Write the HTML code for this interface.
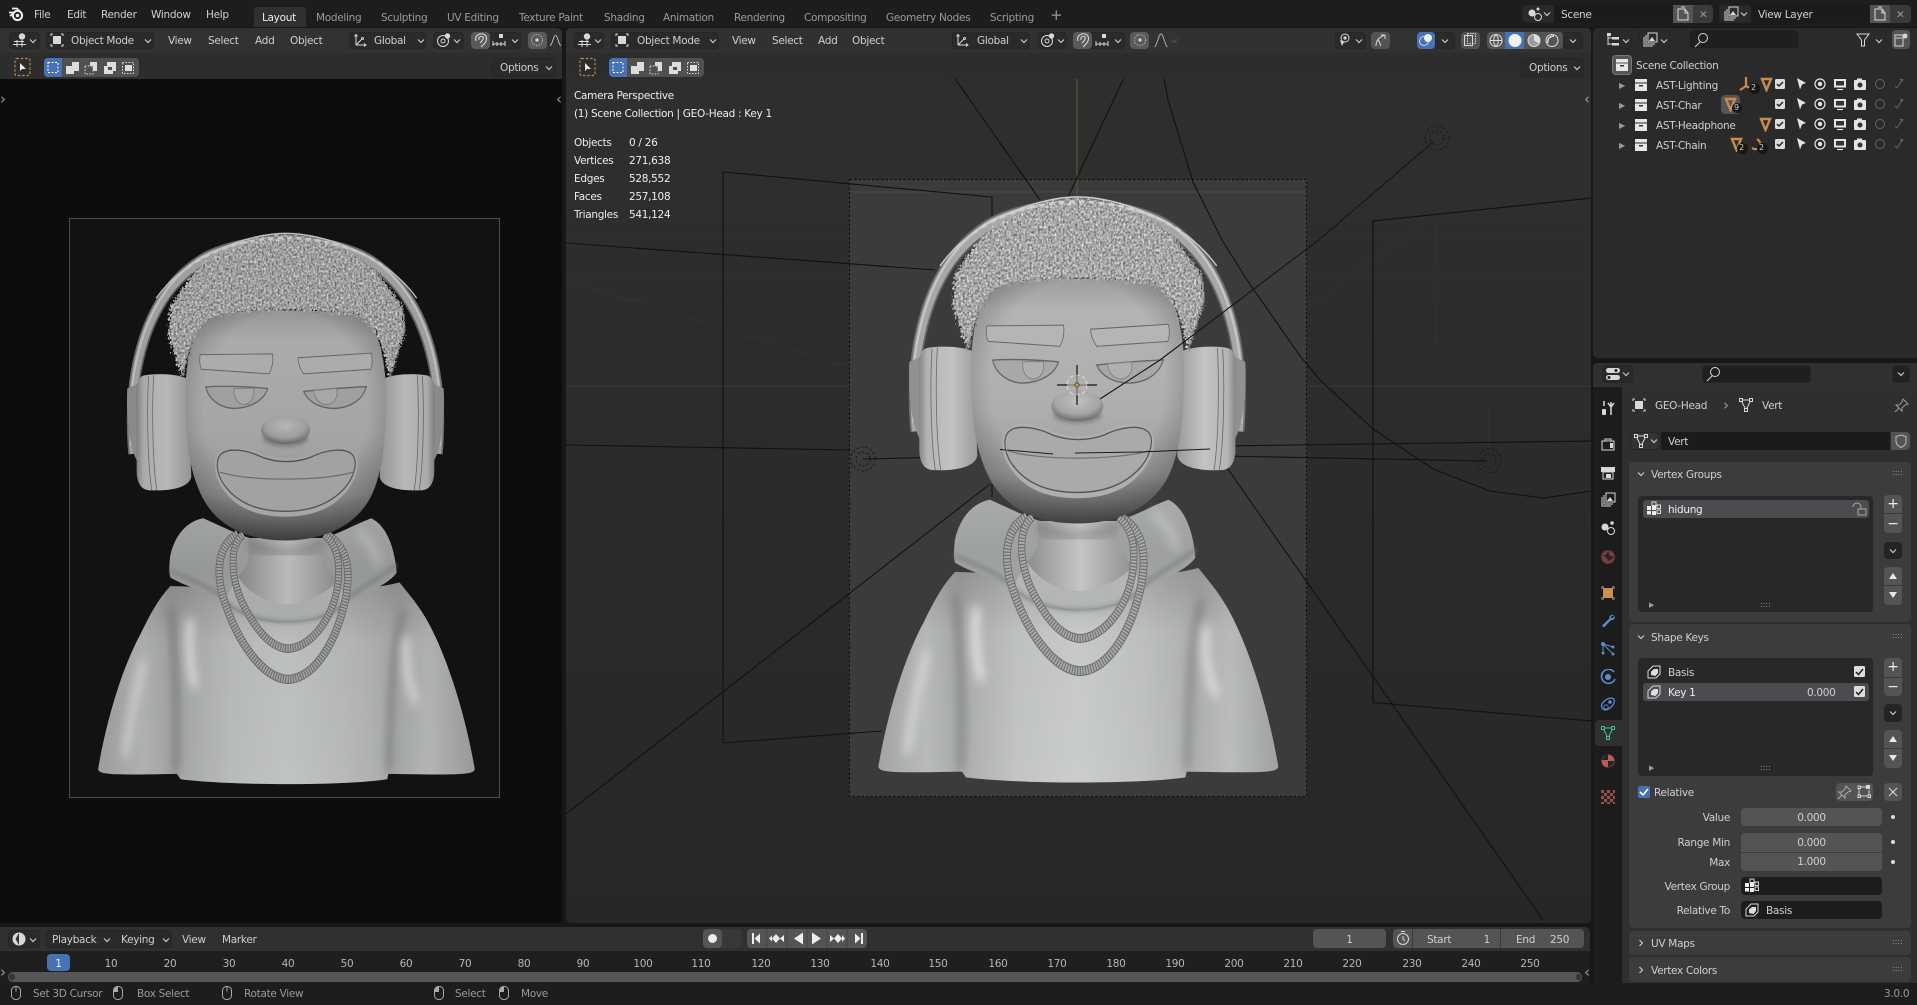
<!DOCTYPE html>
<html><head><meta charset="utf-8"><title>Blender</title>
<style>
html,body{margin:0;padding:0;width:1917px;height:1005px;overflow:hidden;background:#171717}
*{box-sizing:border-box}
body{font-family:"DejaVu Sans","Liberation Sans",sans-serif;font-size:10.5px;letter-spacing:-.3px;color:#cfcfcf;position:relative}
.a{position:absolute}
.t{position:absolute;white-space:nowrap;line-height:14px;color:#cfcfcf;margin-top:1px}
.d{color:#9a9a9a}.w{color:#eee}
.r{text-align:right}.m{text-align:center}
.i{position:absolute;width:16px;height:16px;fill:none;stroke:currentColor;color:#d8d8d8;stroke-width:1}
.c{width:10px;height:10px;color:#c8c8c8;stroke-width:1.2}
.b{position:absolute;background:#2a2a2a;border:1px solid #262626;border-radius:4px}
.g{position:absolute;background:#545454;border-radius:4px}
.h{position:absolute;left:0;right:0;background:rgba(50,50,50,.93)}
.s{position:absolute;left:0;right:0;background:rgba(45,45,45,.88)}
.p{position:absolute;background:#3c3c3c;border-radius:4px;left:36px;width:282px}
.l{position:absolute;background:#282828;border-radius:4px;left:45px;width:235px}
.n{position:absolute;text-align:center;width:40px;line-height:14px;color:#b5b5b5;top:957px}
</style></head><body>
<svg width="0" height="0" style="position:absolute">
<defs>
<symbol id="chev" viewBox="0 0 10 10"><path d="M2 3.5L5 6.5L8 3.5"/></symbol>
<symbol id="logo" viewBox="0 0 16 16"><circle cx="9.5" cy="9.5" r="4.6" fill="none" stroke="#eee" stroke-width="2"/><circle cx="9.5" cy="9.5" r="1.8" fill="#eee" stroke="none"/><path d="M1 6.5h6M4 2.5h5l4 4M2 10l5-4" stroke="#eee" stroke-width="1.8" fill="none"/></symbol>
<symbol id="ed3d" viewBox="0 0 16 16"><path d="M1 12.5h13M2 9.5h10M5 8v7M10 8v7"/><circle cx="10" cy="4.5" r="3.2" fill="currentColor" stroke="none"/></symbol>
<symbol id="obj" viewBox="0 0 16 16"><path d="M4 2H2v2M12 2h2v2M4 14H2v-2M12 14h2v-2"/><rect x="4" y="4" width="8" height="8" fill="currentColor" stroke="none"/></symbol>
<symbol id="glob" viewBox="0 0 16 16"><path d="M4 13V2.5M4 13h10M4 13l6-6M2.5 4.5L4 2.5l1.5 2M12 11.5l2 1.5-2 1.5"/><circle cx="10.5" cy="6.5" r="1"/></symbol>
<symbol id="pivot" viewBox="0 0 16 16"><circle cx="7" cy="9" r="5.5"/><circle cx="7" cy="9" r="2"/><circle cx="11.5" cy="4" r="2.7" fill="currentColor" stroke="none"/></symbol>
<symbol id="magnet" viewBox="0 0 16 16"><path d="M3 9C1 3 8 0 12 3c3 3 1 7-1 9l-3 3M6 8C5 4 9 4 10 5c1 2-1 4-3 6" stroke-width="1.1"/></symbol>
<symbol id="snap" viewBox="0 0 16 16"><path d="M2 9v5M14 9v5M2 12h12M6 10v4M10 10v4"/><rect x="8" y="2" width="4" height="4" fill="currentColor" stroke="none"/></symbol>
<symbol id="prop" viewBox="0 0 16 16"><circle cx="8" cy="8" r="5.5" stroke-dasharray="1.5 1.2" opacity=".7"/><circle cx="8" cy="8" r="1.6" fill="currentColor" stroke="none"/></symbol>
<symbol id="fall" viewBox="0 0 16 16"><path d="M1.5 15C4.5 13 5.5 2 8 2s3.500 11 6.500 13"/></symbol>
<symbol id="tool" viewBox="0 0 20 20"><rect x="2" y="1.500" width="15" height="17" rx="1.500" fill="none" stroke="#b08a50" stroke-dasharray="2.500 1.800" stroke-width="1.200"/><path d="M7 6v8l2-2h4z" fill="#eee" stroke="none"/></symbol>
<symbol id="sel" viewBox="0 0 95 19"><rect width="95" height="19" rx="4" fill="#505050" stroke="none"/><path d="M4 0h14v19H4a4 4 0 0 1-4-4V4a4 4 0 0 1 4-4z" fill="#4772b3" stroke="none"/><rect x="4" y="4.500" width="10" height="10" fill="none" stroke="#fff" stroke-dasharray="2 1.500"/><path fill="#ddd" stroke="none" d="M22 8h6V4h7v9h-5v3h-8z"/><rect x="41" y="8" width="8" height="8" fill="none" stroke="#ddd" stroke-dasharray="1.500 1.500"/><path fill="#ddd" stroke="none" d="M46 4h7v9h-4V8h-3z"/><path fill="#ddd" fill-rule="evenodd" stroke="none" d="M60 8h3V4h9v9h-3v3h-9zM64 9v3h4V9z"/><rect x="78.500" y="4.500" width="11" height="11" fill="none" stroke="#ddd" stroke-dasharray="1.500 1.500"/><rect x="81" y="7" width="7" height="6" fill="#ddd" stroke="none"/></symbol>
<symbol id="coll" viewBox="0 0 16 16"><rect x="2" y="2" width="12" height="3.500" fill="#e6e6e6" stroke="none"/><path d="M2 6.500h12V14H2z" fill="#e6e6e6" stroke="none"/><rect x="6" y="8" width="4" height="1.500" fill="#333" stroke="none"/></symbol>
<symbol id="tri" viewBox="0 0 16 16"><path d="M4 3h9L8.500 14z" fill="none" stroke="#c98c50" stroke-width="2.400"/></symbol>
<symbol id="rowic" viewBox="0 0 136 16">
<rect x="3" y="3" width="10" height="10" rx="1.500" fill="#ddd" stroke="none"/><path d="M5 8l2 2 4-4" stroke="#222" stroke-width="1.500" fill="none"/>
<path d="M25 2l9 5-4 1.500-2 5z" fill="#e4e4e4" stroke="none"/>
<circle cx="48" cy="8" r="5" fill="none" stroke="#e4e4e4" stroke-width="1.200"/><circle cx="48" cy="8" r="2.200" fill="#e4e4e4" stroke="none"/>
<rect x="62" y="3" width="12" height="8.500" fill="#e4e4e4" stroke="none"/><rect x="64" y="5" width="8" height="4.500" fill="#333" stroke="none"/><path d="M65 13.500h6" stroke="#e4e4e4" stroke-width="1.200"/>
<rect x="82" y="4" width="12" height="10" rx="1" fill="#e4e4e4" stroke="none"/><rect x="85" y="2.500" width="5" height="2" fill="#e4e4e4" stroke="none"/><circle cx="88" cy="9" r="2.500" fill="#333" stroke="none"/>
<circle cx="108" cy="8" r="4.500" fill="none" stroke="#666"/><path d="M128 3l3 1-2 2M130 4l-5 8-2-2" fill="none" stroke="#666"/></symbol>
<symbol id="vert" viewBox="0 0 16 16"><path d="M3 3h10L8 13z" fill="none"/><rect x="1.500" y="1.500" width="3" height="3" fill="#333"/><rect x="11.500" y="1.500" width="3" height="3" fill="#333"/><rect x="6.500" y="11.500" width="3" height="3" fill="#333"/></symbol>
<symbol id="group" viewBox="0 0 16 16"><rect x="6" y="1" width="4" height="3.500"/><rect x="11" y="4" width="3.500" height="3.500"/><rect x="11" y="9" width="3.500" height="3.500"/><path fill="#eee" stroke="none" d="M1 5h4v4H1zM6 5h4v4H6zM1 10h4v3.500H1zM6 10h4v4H6z"/></symbol>
<symbol id="sk" viewBox="0 0 16 16"><path d="M2 14V7l5-5h7v8l-4 4z" fill="none"/><path d="M5 11V7.500L8 5h4v4l-2.500 3z" fill="#ddd" stroke="none"/></symbol>
<symbol id="mouse" viewBox="0 0 16 16"><rect x="3.500" y="1.500" width="9" height="13" rx="4" fill="none"/><path d="M8 1.500v5"/></symbol>
<symbol id="mousel" viewBox="0 0 16 16"><rect x="3.500" y="1.500" width="9" height="13" rx="4" fill="none"/><path d="M8 2v5H4V5a3 3 0 0 1 4-3z" fill="currentColor" stroke="none"/></symbol>

<linearGradient id="gBody" x1="0" x2="1" y1="0" y2="0"><stop offset="0" stop-color="#a2a5a4"/><stop offset=".12" stop-color="#b8bbba"/><stop offset=".2" stop-color="#a9acab"/><stop offset=".35" stop-color="#c2c5c4"/><stop offset=".5" stop-color="#cacdcc"/><stop offset=".66" stop-color="#c0c3c2"/><stop offset=".8" stop-color="#aeb1b0"/><stop offset=".88" stop-color="#bbbebd"/><stop offset="1" stop-color="#9fa2a1"/></linearGradient>
<linearGradient id="gTop" x1="0" x2="0" y1="0" y2="1"><stop offset="0" stop-color="#000" stop-opacity=".16"/><stop offset=".3" stop-color="#000" stop-opacity=".02"/><stop offset="1" stop-color="#000" stop-opacity="0"/></linearGradient>
<linearGradient id="gHead" x1="0" x2="0" y1="0" y2="1"><stop offset="0" stop-color="#9c9e9d"/><stop offset=".13" stop-color="#b3b5b4"/><stop offset=".55" stop-color="#adafae"/><stop offset=".8" stop-color="#999b9a"/><stop offset=".92" stop-color="#717372"/><stop offset="1" stop-color="#505151"/></linearGradient>
<radialGradient id="gEdge" cx=".5" cy=".42" r=".66"><stop offset=".62" stop-color="#000" stop-opacity="0"/><stop offset="1" stop-color="#000" stop-opacity=".32"/></radialGradient>
<linearGradient id="gCup" x1="0" x2="1" y1="0" y2="0"><stop offset="0" stop-color="#838584"/><stop offset=".14" stop-color="#b2b4b3"/><stop offset=".55" stop-color="#c2c4c3"/><stop offset="1" stop-color="#9a9c9b"/></linearGradient>
<linearGradient id="gHood" x1="0" x2="0" y1="0" y2="1"><stop offset="0" stop-color="#a8abaa"/><stop offset=".5" stop-color="#9da09f"/><stop offset="1" stop-color="#a6a9a8"/></linearGradient>
<linearGradient id="gNeck" x1="0" x2="1" y1="0" y2="0"><stop offset="0" stop-color="#8b8e8d"/><stop offset=".5" stop-color="#c4c6c5"/><stop offset="1" stop-color="#8f9291"/></linearGradient>
<radialGradient id="gNose" cx=".5" cy=".35" r=".65"><stop offset="0" stop-color="#c0c2c1"/><stop offset=".65" stop-color="#a4a6a5"/><stop offset="1" stop-color="#6a6c6b"/></radialGradient>
<filter id="bl" x="-30%" y="-30%" width="160%" height="160%"><feGaussianBlur stdDeviation="14"/></filter>
<filter id="bl2" x="-30%" y="-30%" width="160%" height="160%"><feGaussianBlur stdDeviation="6"/></filter>
<filter id="hair" x="-6%" y="-8%" width="112%" height="116%" color-interpolation-filters="sRGB">
<feTurbulence type="fractalNoise" baseFrequency=".16" numOctaves="3" seed="4" result="n"/>
<feDisplacementMap in="SourceGraphic" in2="n" scale="30" xChannelSelector="R" yChannelSelector="G" result="d"/>
<feColorMatrix in="n" type="matrix" values=".8 0 0 0 .25 .8 0 0 0 .25 .8 0 0 0 .25 0 0 0 0 1" result="g"/>
<feComposite in="g" in2="d" operator="in"/>
</filter>
<clipPath id="bodyClip"><path d="M115 1462C140 1340 190 1200 250 1110C280 1060 305 1020 345 985C400 985 450 990 500 990L920 990C980 990 1030 985 1075 975C1120 1020 1150 1050 1180 1100C1240 1200 1290 1340 1315 1462C1310 1475 1290 1478 1040 1474L1036 1488C900 1505 540 1505 378 1488L366 1474C140 1478 120 1475 115 1462Z"/></clipPath>

<g id="side">
<path d="M228 640C205 420 270 230 440 140C500 108 610 88 712 86" fill="none" stroke="#6e7070" stroke-width="34"/>
<path d="M228 640C205 420 270 230 440 140C500 108 610 88 712 86" fill="none" stroke="#a6a8a7" stroke-width="24"/>
<path d="M220 620C205 420 262 230 432 135C500 100 610 80 712 78" fill="none" stroke="#c6c8c7" stroke-width="6"/>
<path d="M240 640C222 430 285 240 445 152C500 122 610 102 712 100" fill="none" stroke="#5e6060" stroke-width="3"/>
<path d="M208 470C204 540 212 620 240 660L262 660V450z" fill="#8f9291"/>
<path d="M262 436C300 430 370 432 400 445L412 700C405 730 340 738 275 735C250 732 240 715 238 690L236 470C238 450 248 438 262 436Z" fill="url(#gCup)"/>
<path d="M276 438C270 520 272 660 286 735M292 436C286 520 288 660 302 736" fill="none" stroke="#6a6c6b" stroke-width="2.500"/>
</g>
<g id="ch">
<use href="#side"/>
<use href="#side" transform="translate(1424 0) scale(-1 1)"/>
<path d="M115 1462C140 1340 190 1200 250 1110C280 1060 305 1020 345 985C400 985 450 990 500 990L920 990C980 990 1030 985 1075 975C1120 1020 1150 1050 1180 1100C1240 1200 1290 1340 1315 1462C1310 1475 1290 1478 1040 1474L1036 1488C900 1505 540 1505 378 1488L366 1474C140 1478 120 1475 115 1462Z" fill="url(#gBody)"/>
<path d="M115 1462C140 1340 190 1200 250 1110C280 1060 305 1020 345 985C400 985 450 990 500 990L920 990C980 990 1030 985 1075 975C1120 1020 1150 1050 1180 1100C1240 1200 1290 1340 1315 1462C1310 1475 1290 1478 1040 1474L1036 1488C900 1505 540 1505 378 1488L366 1474C140 1478 120 1475 115 1462Z" fill="url(#gTop)"/>
<g clip-path="url(#bodyClip)">
<g filter="url(#bl)">
<path d="M345 1040C360 1150 370 1320 362 1470" stroke="#6a6c6b" stroke-width="12" fill="none"/>
<path d="M1090 1050C1050 1130 1045 1320 1042 1470" stroke="#6a6c6b" stroke-width="12" fill="none"/>
<path d="M410 1070C400 1130 410 1210 425 1250" stroke="#e8eae9" stroke-width="22" fill="none"/>
<path d="M1100 1120C1090 1170 1100 1240 1130 1290" stroke="#e0e2e1" stroke-width="22" fill="none"/>
<path d="M260 1180C230 1280 210 1370 200 1430" stroke="#d8dad9" stroke-width="22" fill="none"/>
</g></g>
<path d="M345 905C360 850 400 815 450 808C510 830 560 850 600 860L830 860C880 850 930 825 985 808C1030 825 1060 880 1066 950C1045 975 985 1000 930 1015C890 1060 800 1080 712 1080C620 1080 550 1060 500 1012C460 1000 390 985 345 962C340 945 342 925 345 905Z" fill="url(#gHood)"/>
<path d="M345 945C400 965 470 985 520 1020M1066 930C1010 965 950 990 905 1020" fill="none" stroke="#7e8180" stroke-width="8" filter="url(#bl2)"/>
<path d="M940 840C970 860 1000 890 1010 930" fill="none" stroke="#c4c7c6" stroke-width="18" filter="url(#bl)"/>
<path d="M590 860L832 860C825 900 830 930 880 970C850 1000 780 1030 720 1032C650 1030 590 1000 560 960C600 930 600 900 590 860Z" fill="url(#gNeck)"/>
<path d="M560 960C590 1000 650 1030 720 1032C780 1030 850 1000 880 970L900 1020C860 1060 790 1076 720 1076C650 1076 570 1060 520 1020Z" fill="#b3b6b5"/>
<path d="M525 1025C570 1062 650 1078 720 1078C790 1078 860 1062 900 1025" fill="none" stroke="#777a79" stroke-width="5" filter="url(#bl2)"/>
<path d="M590 872C650 905 780 905 832 872" fill="none" stroke="#5f6160" stroke-width="20" opacity=".5" filter="url(#bl)"/>
<g fill="none">
<path d="M560 850C490 880 490 960 520 1030C560 1130 640 1225 720 1228C810 1225 880 1120 905 1010C920 940 910 880 840 850" stroke="#6c6e6d" stroke-width="24"/>
<path d="M560 850C490 880 490 960 520 1030C560 1130 640 1225 720 1228C810 1225 880 1120 905 1010C920 940 910 880 840 850" stroke="#a9abaa" stroke-width="19" stroke-dasharray="5 3"/>
<path d="M578 850C530 880 540 960 570 1020C610 1090 660 1145 720 1148C780 1145 850 1090 875 1000C890 930 880 880 835 850" stroke="#6c6e6d" stroke-width="22"/>
<path d="M578 850C530 880 540 960 570 1020C610 1090 660 1145 720 1148C780 1145 850 1090 875 1000C890 930 880 880 835 850" stroke="#a9abaa" stroke-width="17" stroke-dasharray="5 3"/>
</g>
<path d="M470 280C560 262 860 262 955 280C1000 300 1030 380 1032 480C1034 620 1015 700 985 750C930 840 810 866 712 866C610 866 500 840 445 750C410 690 392 620 393 480C395 380 425 300 470 280Z" fill="url(#gHead)"/>
<path d="M470 280C560 262 860 262 955 280C1000 300 1030 380 1032 480C1034 620 1015 700 985 750C930 840 810 866 712 866C610 866 500 840 445 750C410 690 392 620 393 480C395 380 425 300 470 280Z" fill="url(#gEdge)"/>
<path d="M338 330L345 255L425 165C500 110 620 70 712 70C810 70 930 110 1005 165L1085 255L1095 320L1045 445C1030 380 1000 300 950 285C860 262 560 262 480 285C430 305 400 380 385 445Z" filter="url(#hair)" fill="#fff"/>
<path d="M300 235C400 120 600 66 712 66C830 66 1030 120 1130 235" fill="none" stroke="#c9cbca" stroke-width="4"/>
<path d="M400 155C500 95 620 78 712 78C810 78 930 95 1030 155" fill="none" stroke="#cfd1d0" stroke-width="7" stroke-dasharray="16 14"/>
<g fill="#b4b6b5" stroke="#686a69" stroke-width="2.500">
<path d="M440 382L670 380C675 400 668 420 660 432L445 420C438 410 438 395 440 382Z"/>
<path d="M752 390L985 378C990 395 988 410 983 420L770 432C760 420 752 405 752 390Z"/>
</g>
<g fill="#a7a9a8" stroke="#666867" stroke-width="3.500">
<path d="M458 466C520 462 600 466 655 470C645 500 600 522 545 522C500 520 465 495 458 466Z"/>
<path d="M770 478C830 472 900 468 970 465C960 495 925 520 870 522C820 522 785 505 770 478Z"/>
</g>
<g fill="#afb1b0" stroke="#7e807f" stroke-width="2.500">
<path d="M548 470C545 500 565 512 580 512C605 510 615 490 610 469Z"/>
<path d="M802 475C805 500 825 513 845 512C870 510 880 490 875 470Z"/>
</g>
<ellipse cx="712" cy="600" rx="72" ry="20" fill="#555656" opacity=".55" filter="url(#bl2)"/>
<ellipse cx="712" cy="578" rx="78" ry="37" fill="url(#gNose)"/>
<path d="M498 640C525 612 590 620 640 642C690 656 740 656 790 642C840 620 905 612 932 640C955 665 937 708 907 738C855 790 780 804 712 804C640 804 565 790 518 738C488 708 476 665 498 640Z" fill="#aeb0af"/>
<path d="M505 642C530 622 590 630 640 650C690 664 740 664 790 650C840 630 900 622 925 642C945 662 930 702 900 730C850 775 780 790 712 790C640 790 570 775 525 730C495 702 485 662 505 642Z" fill="#a9abaa" stroke="#555756" stroke-width="3.500"/>
<path d="M503 688C600 712 820 712 928 688" stroke="#6e706f" stroke-width="3" fill="none"/>
</g>
</defs></svg>

<!-- top bar -->
<div class="a" style="left:0;top:0;width:1917px;height:27px;background:#1d1d1d"></div>
<svg class="i" style="left:8px;top:6px"><use href="#logo"/></svg>
<span class="t" style="left:34px;top:7px">File</span>
<span class="t" style="left:67px;top:7px">Edit</span>
<span class="t" style="left:101px;top:7px">Render</span>
<span class="t" style="left:151px;top:7px">Window</span>
<span class="t" style="left:206px;top:7px">Help</span>
<div class="a" style="left:254px;top:7px;width:52px;height:20px;background:#303030;border-radius:4px 4px 0 0"></div>
<span class="t w" style="left:262px;top:10px">Layout</span>
<span class="t d" style="left:316px;top:10px">Modeling</span>
<span class="t d" style="left:381px;top:10px">Sculpting</span>
<span class="t d" style="left:447px;top:10px">UV Editing</span>
<span class="t d" style="left:519px;top:10px">Texture Paint</span>
<span class="t d" style="left:604px;top:10px">Shading</span>
<span class="t d" style="left:663px;top:10px">Animation</span>
<span class="t d" style="left:734px;top:10px">Rendering</span>
<span class="t d" style="left:804px;top:10px">Compositing</span>
<span class="t d" style="left:886px;top:10px">Geometry Nodes</span>
<span class="t d" style="left:990px;top:10px">Scripting</span>
<span class="t d" style="left:1050px;top:7px;font-size:15px">+</span>
<!-- scene -->
<div class="b" style="left:1522px;top:5px;width:191px;height:18px"></div>
<div class="a" style="left:1554px;top:5px;width:119px;height:18px;background:#1b1b1b"></div>
<div class="g" style="left:1673px;top:5px;width:20px;height:18px;border-radius:0"></div>
<div class="g" style="left:1693px;top:5px;width:20px;height:18px;background:#3a3a3a;border-radius:0 4px 4px 0"></div>
<svg class="i" style="left:1527px;top:6px"><circle cx="5" cy="7" r="3.500" fill="currentColor" stroke="none"/><circle cx="11" cy="3" r="1.500" fill="currentColor" stroke="none"/><circle cx="11" cy="11" r="3.500"/></svg>
<svg class="i c" style="left:1542px;top:9px"><use href="#chev"/></svg>
<span class="t" style="left:1561px;top:7px">Scene</span>
<svg class="i" style="left:1675px;top:6px"><path d="M3 3v11h10V7L10 3zM10 3v4h3M6 1h4"/></svg>
<span class="t d" style="left:1699px;top:7px">✕</span>
<div class="b" style="left:1719px;top:5px;width:192px;height:18px"></div>
<div class="a" style="left:1751px;top:5px;width:119px;height:18px;background:#1b1b1b"></div>
<div class="g" style="left:1870px;top:5px;width:20px;height:18px;border-radius:0"></div>
<div class="g" style="left:1890px;top:5px;width:21px;height:18px;background:#3a3a3a;border-radius:0 4px 4px 0"></div>
<svg class="i" style="left:1723px;top:6px"><path d="M2 5v9h9M4 3v9h9M6 1h9v9H6z"/><path d="M7 9l3-4 3 4z" fill="currentColor" stroke="none"/></svg>
<svg class="i c" style="left:1739px;top:9px"><use href="#chev"/></svg>
<span class="t" style="left:1758px;top:7px">View Layer</span>
<svg class="i" style="left:1872px;top:6px"><path d="M3 3v11h10V7L10 3zM10 3v4h3M6 1h4"/></svg>
<span class="t d" style="left:1896px;top:7px">✕</span>

<!-- left viewport -->
<div class="a" style="left:0;top:28px;width:562px;height:895px;background:#0d0d0d;overflow:hidden;border-radius:0 5px 5px 0">
 <div class="a" style="left:69px;top:190px;width:431px;height:580px;background:#121212;border:1px solid #4c4c4c"></div>
 <div class="h" style="top:0;height:25px;background:#323232"></div>
 <div class="s" style="top:25px;height:26px;background:#2d2d2d"></div>
</div>
<svg class="a" style="left:62px;top:208px;width:452px;height:602px;filter:brightness(.95)" viewBox="0 0 1440 1568" preserveAspectRatio="none"><use href="#ch"/></svg>
<!-- left header -->
<div class="b" style="left:9px;top:32px;width:31px;height:17px"></div>
<svg class="i" style="left:12px;top:32px"><use href="#ed3d"/></svg>
<svg class="i c" style="left:28px;top:36px"><use href="#chev"/></svg>
<div class="b" style="left:46px;top:32px;width:108px;height:17px"></div>
<svg class="i" style="left:49px;top:32px"><use href="#obj"/></svg>
<span class="t" style="left:71px;top:33px">Object Mode</span>
<svg class="i c" style="left:143px;top:36px"><use href="#chev"/></svg>
<span class="t" style="left:168px;top:33px">View</span>
<span class="t" style="left:208px;top:33px">Select</span>
<span class="t" style="left:255px;top:33px">Add</span>
<span class="t" style="left:290px;top:33px">Object</span>
<div class="b" style="left:349px;top:32px;width:77px;height:17px"></div>
<svg class="i" style="left:352px;top:32px"><use href="#glob"/></svg>
<span class="t" style="left:374px;top:33px">Global</span>
<svg class="i c" style="left:416px;top:36px"><use href="#chev"/></svg>
<div class="b" style="left:433px;top:32px;width:31px;height:17px"></div>
<svg class="i" style="left:436px;top:32px"><use href="#pivot"/></svg>
<svg class="i c" style="left:452px;top:36px"><use href="#chev"/></svg>
<div class="b" style="left:471px;top:32px;width:50px;height:17px"></div>
<div class="g" style="left:471px;top:32px;width:19px;height:17px;background:#5a5a5a"></div>
<svg class="i" style="left:473px;top:32px"><use href="#magnet"/></svg>
<svg class="i" style="left:491px;top:32px"><use href="#snap"/></svg>
<svg class="i c" style="left:510px;top:36px"><use href="#chev"/></svg>
<div class="g" style="left:528px;top:32px;width:19px;height:17px;background:#5a5a5a"></div>
<svg class="i" style="left:529px;top:32px"><use href="#prop"/></svg>
<svg class="i" style="left:549px;top:32px;width:13px"><use href="#fall"/></svg>
<svg class="a" style="left:13px;top:57px;width:20px;height:20px"><use href="#tool"/></svg>
<svg class="a" style="left:44px;top:58px;width:95px;height:19px"><use href="#sel"/></svg>
<div class="b" style="left:492px;top:58px;width:64px;height:19px"></div>
<span class="t" style="left:500px;top:60px">Options</span>
<svg class="i c" style="left:544px;top:63px"><use href="#chev"/></svg>
<span class="t d" style="left:0;top:91px;font-size:15px">›</span>
<span class="t d" style="left:556px;top:91px;font-size:15px">‹</span>
<span class="t d" style="left:565px;top:91px;font-size:15px">›</span>

<!-- right viewport -->
<div class="a" style="left:566px;top:28px;width:1025px;height:895px;background:linear-gradient(#2f2f2f,#272727);overflow:hidden;border-radius:5px">
 <svg class="a" style="left:-566px;top:-28px;width:1917px;height:1005px" viewBox="0 0 1917 1005">
  <path d="M566 123H1591M566 193H1591M566 239H1591M566 274H1591M566 300H1591M566 320H1591M566 338H1591M566 352H1591M566 364H1591M566 375H1591M566 396H1591M566 408H1591M566 422H1591" stroke="#2f2f2f" fill="none"/>
  <path d="M1590 100L1300 314M566 280L860 370M1437 147V351M1489 405V450" stroke="#323232" fill="none"/>
  <rect x="849" y="179" width="458" height="618" fill="#3b3b3b"/>
  <path d="M849 192H1307" stroke="#484848"/>
  <path d="M566 386H1591" stroke="#4a3535"/>
  <path d="M1077 78V400" stroke="#5a5e30"/>
  <g fill="none" stroke="#111" stroke-width="1.100">
   <path d="M723 743V172L992 197V217M723 743L882 731"/>
   <path d="M566 243L935 270"/>
   <path d="M566 445L849 450"/>
   <path d="M863 459L950 457M1220 456L1487 461"/>
   <path d="M1592 441L1000 449"/>
   <path d="M935 50L1040 200M1137 50L1068 197"/>
   <path d="M1160 57L1168 100L1193 182L1222 240L1247 280L1300 356L1320 380L1373 429L1433 469L1490 491L1543 498L1592 491"/>
   <path d="M1223 462L1543 920"/>
   <path d="M566 814L990 484"/>
   <path d="M1592 198L1373 221V702.500L1592 721"/>
   <path d="M992 484V497"/>
  </g>
  <g fill="none" stroke="#1a1a1a" stroke-dasharray="2.500 2">
   <circle cx="1437" cy="138" r="12"/><circle cx="1437" cy="138" r="7"/>
   <circle cx="863" cy="459" r="12"/><circle cx="863" cy="459" r="7"/>
   <circle cx="1489" cy="461" r="12"/><circle cx="1489" cy="461" r="7"/>
  </g>
  <rect x="849.500" y="179.500" width="457" height="617" fill="none" stroke="#0c0c0c" stroke-dasharray="2.500 2"/>
 </svg>
 <div class="h" style="top:0;height:25px"></div>
 <div class="s" style="top:25px;height:26px"></div>
</div>
<svg class="a" style="left:840px;top:170px;width:480px;height:640px" viewBox="0 0 1440 1568" preserveAspectRatio="none"><use href="#ch"/></svg>
<svg class="a" style="left:0;top:0;width:1917px;height:1005px;pointer-events:none" viewBox="0 0 1917 1005">
 <path d="M1100 399L1160 360L1320 239L1433 142" stroke="#151515" fill="none" stroke-width="1.100"/>
 <path d="M1000 449.500L1006 450" stroke="#161616" fill="none"/>
 <path d="M1007 450L1053 454M1075 453L1140 452" stroke="#1c1c1c" fill="none"/>
 <path d="M1140 452L1210 449" stroke="#161616" fill="none"/>
 <circle cx="1077" cy="385" r="10" fill="none" stroke="#f0c8c8" stroke-width="1.400" stroke-dasharray="4 2.500"/>
 <path d="M1077 365V375M1077 395V405M1057 385H1067M1087 385H1097" stroke="#111" stroke-width="1.200"/>
 <path d="M1077 375V395M1067 385H1087" stroke="#333" stroke-width=".6"/>
 <circle cx="1077" cy="385" r="2.200" fill="#e0902c" stroke="#222" stroke-width=".6"/>
</svg>
<!-- right header -->
<div class="b" style="left:574px;top:32px;width:30px;height:17px"></div>
<svg class="i" style="left:577px;top:32px"><use href="#ed3d"/></svg>
<svg class="i c" style="left:593px;top:36px"><use href="#chev"/></svg>
<div class="b" style="left:611px;top:32px;width:108px;height:17px"></div>
<svg class="i" style="left:614px;top:32px"><use href="#obj"/></svg>
<span class="t" style="left:637px;top:33px">Object Mode</span>
<svg class="i c" style="left:708px;top:36px"><use href="#chev"/></svg>
<span class="t" style="left:732px;top:33px">View</span>
<span class="t" style="left:772px;top:33px">Select</span>
<span class="t" style="left:818px;top:33px">Add</span>
<span class="t" style="left:852px;top:33px">Object</span>
<div class="b" style="left:952px;top:32px;width:78px;height:17px"></div>
<svg class="i" style="left:954px;top:32px"><use href="#glob"/></svg>
<span class="t" style="left:977px;top:33px">Global</span>
<svg class="i c" style="left:1019px;top:36px"><use href="#chev"/></svg>
<div class="b" style="left:1037px;top:32px;width:30px;height:17px"></div>
<svg class="i" style="left:1040px;top:32px"><use href="#pivot"/></svg>
<svg class="i c" style="left:1056px;top:36px"><use href="#chev"/></svg>
<div class="b" style="left:1073px;top:32px;width:52px;height:17px"></div>
<div class="g" style="left:1073px;top:32px;width:19px;height:17px;background:#5a5a5a"></div>
<svg class="i" style="left:1075px;top:32px"><use href="#magnet"/></svg>
<svg class="i" style="left:1094px;top:32px"><use href="#snap"/></svg>
<svg class="i c" style="left:1113px;top:36px"><use href="#chev"/></svg>
<div class="g" style="left:1130px;top:32px;width:19px;height:17px;background:#5a5a5a"></div>
<svg class="i" style="left:1132px;top:32px"><use href="#prop"/></svg>
<div class="b" style="left:1150px;top:32px;width:30px;height:17px;background:#333;border-color:#333"></div>
<svg class="i" style="left:1153px;top:32px;color:#aaa"><use href="#fall"/></svg>
<svg class="i c" style="left:1169px;top:36px;color:#555"><use href="#chev"/></svg>
<svg class="a" style="left:578px;top:57px;width:20px;height:20px"><use href="#tool"/></svg>
<svg class="a" style="left:609px;top:58px;width:95px;height:19px"><use href="#sel"/></svg>
<!-- viewport right-side header -->
<div class="b" style="left:1335px;top:32px;width:31px;height:17px"></div>
<svg class="i" style="left:1337px;top:32px"><circle cx="8" cy="6" r="4"/><circle cx="8" cy="6" r="1.600" fill="currentColor" stroke="none"/><path d="M3 8l4 2-2 4z" fill="currentColor" stroke="none"/></svg>
<svg class="i c" style="left:1354px;top:36px"><use href="#chev"/></svg>
<div class="g" style="left:1371px;top:32px;width:19px;height:17px"></div>
<svg class="i" style="left:1373px;top:32px"><path d="M3 14C3 9 6 5 12 3M12 3H8M12 3v4M5 7l3 7"/></svg>
<div class="a" style="left:1390px;top:32px;width:20px;height:17px;background:#333"></div>
<div class="g" style="left:1417px;top:32px;width:18px;height:17px;background:#4772b3"></div>
<svg class="i" style="left:1418px;top:32px"><circle cx="6" cy="9" r="4.500"/><circle cx="10" cy="6" r="4" fill="#eee" stroke="none"/></svg>
<div class="b" style="left:1435px;top:32px;width:20px;height:17px"></div>
<svg class="i c" style="left:1440px;top:36px"><use href="#chev"/></svg>
<div class="g" style="left:1461px;top:32px;width:19px;height:17px"></div>
<svg class="i" style="left:1462px;top:32px"><rect x="2.500" y="3.500" width="8" height="10"/><rect x="5.500" y="1.500" width="8" height="10" stroke-dasharray="1.500 1"/></svg>
<div class="g" style="left:1487px;top:32px;width:76px;height:17px"></div>
<div class="a" style="left:1505px;top:32px;width:19px;height:17px;background:#4772b3"></div>
<svg class="a" style="left:1487px;top:32px;width:76px;height:17px" fill="none" stroke="#ddd"><circle cx="9" cy="8.500" r="6"/><path d="M3 8.500h12M9 2.500c-3 3-3 9 0 12M9 2.500c3 3 3 9 0 12"/><circle cx="28" cy="8.500" r="6.500" fill="#f2f2f2" stroke="none"/><circle cx="47" cy="8.500" r="6" fill="#9a9a9a"/><path d="M47 2.500v6l5 3A6 6 0 0 0 47 2.500z" fill="#ddd" stroke="none"/><circle cx="65" cy="8.500" r="6"/><path d="M61 11c-1-4 2-7 6-7" stroke-width="1.500"/></svg>
<div class="b" style="left:1563px;top:32px;width:20px;height:17px"></div>
<svg class="i c" style="left:1568px;top:36px"><use href="#chev"/></svg>
<div class="b" style="left:1521px;top:58px;width:63px;height:19px"></div>
<span class="t" style="left:1529px;top:60px">Options</span>
<svg class="i c" style="left:1572px;top:63px"><use href="#chev"/></svg>
<span class="t d" style="left:1584px;top:91px;font-size:15px">‹</span>
<!-- overlay text -->
<span class="t w" style="left:574px;top:88px">Camera Perspective</span>
<span class="t w" style="left:574px;top:106px">(1) Scene Collection | GEO-Head : Key 1</span>
<span class="t w" style="left:574px;top:135px">Objects</span><span class="t w" style="left:629px;top:135px">0 / 26</span>
<span class="t w" style="left:574px;top:153px">Vertices</span><span class="t w" style="left:629px;top:153px">271,638</span>
<span class="t w" style="left:574px;top:171px">Edges</span><span class="t w" style="left:629px;top:171px">528,552</span>
<span class="t w" style="left:574px;top:189px">Faces</span><span class="t w" style="left:629px;top:189px">257,108</span>
<span class="t w" style="left:574px;top:207px">Triangles</span><span class="t w" style="left:629px;top:207px">541,124</span>

<!-- outliner -->
<div class="a" style="left:1593px;top:28px;width:324px;height:330px;background:#2a2a2a;border-radius:5px 0 0 5px"></div>
<div class="b" style="left:1602px;top:30px;width:30px;height:19px"></div>
<svg class="i" style="left:1605px;top:32px"><path d="M3 2v11M3 6h4M3 12h4"/><rect x="2" y="1" width="4" height="3" fill="currentColor" stroke="none"/><rect x="7" y="5" width="7" height="2.500" fill="currentColor" stroke="none"/><rect x="7" y="11" width="7" height="2.500" fill="currentColor" stroke="none"/></svg>
<svg class="i c" style="left:1621px;top:36px"><use href="#chev"/></svg>
<div class="b" style="left:1639px;top:30px;width:31px;height:19px"></div>
<svg class="i" style="left:1642px;top:32px"><path d="M2 5v9h9M4 3v9h9M6 1h9v9H6z"/><path d="M7 9l3-4 3 4z" fill="currentColor" stroke="none"/></svg>
<svg class="i c" style="left:1659px;top:36px"><use href="#chev"/></svg>
<div class="b" style="left:1689px;top:30px;width:110px;height:19px;background:#1f1f1f"></div>
<svg class="i" style="left:1693px;top:32px"><circle cx="10" cy="6" r="4.500"/><path d="M7 10l-5 5"/></svg>
<div class="b" style="left:1854px;top:30px;width:32px;height:19px"></div>
<svg class="i" style="left:1855px;top:32px"><path d="M2 2h12L9.500 8v6H6.500V8z"/></svg>
<svg class="i c" style="left:1874px;top:36px"><use href="#chev"/></svg>
<div class="g" style="left:1892px;top:30px;width:18px;height:19px"></div>
<svg class="i" style="left:1893px;top:32px"><path d="M2 3h8v11H2zM3 6h6"/><circle cx="12" cy="4" r="2.500" fill="currentColor" stroke="none"/></svg>
<div class="g" style="left:1612px;top:55px;width:20px;height:20px;background:#555;border:1px solid #777"></div>
<svg class="i" style="left:1614px;top:57px"><use href="#coll"/></svg>
<span class="t" style="left:1636px;top:58px">Scene Collection</span>
<span class="t d" style="left:1619px;top:78px;font-size:8px">▶</span><svg class="i" style="left:1633px;top:77px"><use href="#coll"/></svg><span class="t" style="left:1656px;top:78px">AST-Lighting</span>
<span class="t d" style="left:1619px;top:98px;font-size:8px">▶</span><svg class="i" style="left:1633px;top:97px"><use href="#coll"/></svg><span class="t" style="left:1656px;top:98px">AST-Char</span>
<span class="t d" style="left:1619px;top:118px;font-size:8px">▶</span><svg class="i" style="left:1633px;top:117px"><use href="#coll"/></svg><span class="t" style="left:1656px;top:118px">AST-Headphone</span>
<span class="t d" style="left:1619px;top:138px;font-size:8px">▶</span><svg class="i" style="left:1633px;top:137px"><use href="#coll"/></svg><span class="t" style="left:1656px;top:138px">AST-Chain</span>
<svg class="a" style="left:1772px;top:76px;width:136px;height:16px"><use href="#rowic"/></svg>
<svg class="a" style="left:1772px;top:96px;width:136px;height:16px"><use href="#rowic"/></svg>
<svg class="a" style="left:1772px;top:116px;width:136px;height:16px"><use href="#rowic"/></svg>
<svg class="a" style="left:1772px;top:136px;width:136px;height:16px"><use href="#rowic"/></svg>
<svg class="i" style="left:1738px;top:76px"><path d="M8 1v9M8 10L2 14M8 10l6 3" stroke="#c98c50" stroke-width="2.200"/></svg>
<span class="a" style="left:1749px;top:83px;width:11px;height:11px;border-radius:50%;background:#151515"></span><span class="t" style="left:1751px;top:80px;font-size:8px">2</span>
<svg class="i" style="left:1758px;top:76px"><use href="#tri"/></svg>
<div class="g" style="left:1721px;top:95px;width:19px;height:19px;background:#555"></div>
<svg class="i" style="left:1722px;top:96px"><use href="#tri"/></svg>
<span class="a" style="left:1732px;top:103px;width:10px;height:10px;border-radius:50%;background:#151515"></span><span class="t" style="left:1734px;top:100px;font-size:8px">9</span>
<svg class="i" style="left:1757px;top:116px"><use href="#tri"/></svg>
<svg class="i" style="left:1728px;top:136px"><use href="#tri"/></svg>
<span class="a" style="left:1737px;top:143px;width:11px;height:11px;border-radius:50%;background:#151515"></span><span class="t" style="left:1739px;top:140px;font-size:8px">2</span>
<svg class="i" style="left:1748px;top:136px"><path d="M4 12c3 2 6 1 8-1 1-3 0-6-3-8" stroke="#c98c50" stroke-width="2"/></svg>
<span class="a" style="left:1757px;top:143px;width:11px;height:11px;border-radius:50%;background:#151515"></span><span class="t" style="left:1759px;top:140px;font-size:8px">2</span>

<!-- properties -->
<div class="a" style="left:1593px;top:363px;width:324px;height:620px;background:#2f2f2f;border-radius:5px 0 0 0;overflow:hidden">
 <div class="a" style="left:0;top:0;width:324px;height:24px;background:#303030"></div>
 <div class="a" style="left:0;top:24px;width:29px;height:596px;background:#1c1c1c"></div>
 <div class="a" style="left:2px;top:357px;width:27px;height:26px;background:#303030;border-radius:4px 0 0 4px"></div>
 <div class="p" style="top:99px;height:160px"></div>
 <div class="p" style="top:261px;height:304px"></div>
 <div class="p" style="top:568px;height:24px"></div>
 <div class="p" style="top:594px;height:25px"></div>
 <div class="l" style="top:133px;height:116px"></div>
 <div class="l" style="top:295px;height:118px"></div>
</div>
<div class="b" style="left:1602px;top:365px;width:31px;height:18px"></div>
<svg class="i" style="left:1605px;top:366px"><rect x="1" y="2" width="14" height="5" rx="2.500" fill="currentColor" stroke="none"/><rect x="1" y="9" width="14" height="5" rx="2.500" fill="currentColor" stroke="none"/><circle cx="11" cy="4.500" r="1.500" fill="#222" stroke="none"/><circle cx="4" cy="11.500" r="1.500" fill="#222" stroke="none"/></svg>
<svg class="i c" style="left:1621px;top:369px"><use href="#chev"/></svg>
<div class="b" style="left:1702px;top:365px;width:109px;height:18px;background:#1f1f1f"></div>
<svg class="i" style="left:1705px;top:366px"><circle cx="10" cy="6" r="4.500"/><path d="M7 10l-5 5"/></svg>
<div class="b" style="left:1892px;top:365px;width:18px;height:18px;background:#222"></div>
<svg class="i c" style="left:1896px;top:369px"><use href="#chev"/></svg>
<!-- tabs -->
<svg class="i" style="left:1600px;top:400px"><path d="M4 1v5M11 2v5M8 3l3 4 3-4M11 7v8" stroke-width="1.500"/><rect x="2" y="9" width="4" height="6" rx="1" fill="currentColor" stroke="none"/></svg>
<svg class="i" style="left:1600px;top:436px"><rect x="2" y="5" width="12" height="9"/><path d="M5 5V3h6v2"/><rect x="10" y="7" width="3" height="5" fill="currentColor" stroke="none"/></svg>
<svg class="i" style="left:1600px;top:465px"><path d="M1 2h14v5H1z" fill="currentColor" stroke="none"/><path d="M3 7h10v7H3z"/><rect x="6" y="9" width="5" height="4" fill="currentColor" stroke="none"/></svg>
<svg class="i" style="left:1600px;top:492px"><path d="M2 5v9h9M4 3v9h9M6 1h9v9H6z"/><path d="M7 9l3-4 3 4z" fill="currentColor" stroke="none"/></svg>
<svg class="i" style="left:1600px;top:520px"><circle cx="5" cy="7" r="3.500" fill="currentColor" stroke="none"/><circle cx="12" cy="3" r="1.800" fill="currentColor" stroke="none"/><circle cx="11" cy="11" r="3.500"/></svg>
<svg class="i" style="left:1600px;top:549px"><circle cx="8" cy="8" r="6.500" fill="#7a3d3d" stroke="#6a3535"/><path d="M3 6c3 1 4-1 5-4 2 1 0 4 2 5s3 0 4 1c-2 1-3 3-5 4-1-2-3-2-3-4-1-1-2-1-3-2z" fill="#242424" stroke="none"/></svg>
<svg class="i" style="left:1600px;top:585px"><path d="M4 2H2v2M12 2h2v2M4 14H2v-2M12 14h2v-2" stroke="#aaa"/><rect x="3" y="3" width="10" height="10" fill="#d18f52" stroke="none"/></svg>
<svg class="i" style="left:1600px;top:613px"><path d="M14 2c-3-1-5 1-4.500 3.500L2 12.500 4 14.500l7-7.500c2.500.5 4.500-1.500 3.500-4L12 5.500 10.500 4z" fill="#5b8ccc" stroke="none"/></svg>
<svg class="i" style="left:1600px;top:641px"><path d="M3 3l10 3M3 3l10 10M3 3v9" stroke="#5b8ccc"/><circle cx="3" cy="3" r="2" fill="#5b8ccc" stroke="none"/><circle cx="13" cy="6" r="1.500" fill="#5b8ccc" stroke="none"/><circle cx="13" cy="13" r="1.500" fill="#5b8ccc" stroke="none"/><circle cx="3" cy="12" r="1.500" fill="#5b8ccc" stroke="none"/></svg>
<svg class="i" style="left:1600px;top:669px"><circle cx="8" cy="8" r="3" fill="#5b8ccc" stroke="none"/><path d="M14 3a7 7 0 1 0 1 7" stroke="#5b8ccc" stroke-width="1.600"/></svg>
<svg class="i" style="left:1600px;top:697px"><path d="M2 11C0 7 5 2 11 1c4 0 4 4 2 7-3 4-8 7-11 3z" stroke="#5b8ccc" stroke-width="1.300"/><circle cx="6" cy="10" r="2.200" stroke="#5b8ccc"/><circle cx="10" cy="5" r="1.800" fill="#5b8ccc" stroke="none"/></svg>
<svg class="i" style="left:1600px;top:725px;color:#3fbf98"><use href="#vert"/></svg>
<svg class="i" style="left:1600px;top:753px"><circle cx="8" cy="8" r="6.500" fill="#b85a5a" stroke="none"/><path d="M2 7h6V1.500A6.500 6.500 0 0 0 2 7zM8 8h6a6 6 0 0 1-6 6z" fill="#242424" stroke="none"/></svg>
<svg class="i" style="left:1600px;top:789px"><path fill="#9a4a4a" stroke="none" d="M1 1h14v14H1z"/><path fill="#222" stroke="none" d="M4 1h3v3H4zM10 1h3v3h-3zM1 4h3v3H1zM7 4h3v3H7zM13 4h2v3h-2zM4 7h3v3H4zM10 7h3v3h-3zM1 10h3v3H1zM7 10h3v3H7zM13 10h2v3h-2zM4 13h3v2H4zM10 13h3v2h-3z"/></svg>
<!-- breadcrumb -->
<svg class="i" style="left:1631px;top:397px"><use href="#obj"/></svg>
<span class="t" style="left:1655px;top:398px">GEO-Head</span>
<span class="t d" style="left:1723px;top:397px;font-size:15px">›</span>
<svg class="i" style="left:1738px;top:397px"><use href="#vert"/></svg>
<span class="t" style="left:1762px;top:398px">Vert</span>
<svg class="i" style="left:1894px;top:397px;color:#999"><path d="M9 2l5 5-3 1-3 3 0 3-6-6 3 0 3-3zM5 11l-4 4"/></svg>
<!-- name row -->
<div class="b" style="left:1630px;top:432px;width:30px;height:18px;background:#333"></div>
<svg class="i" style="left:1633px;top:433px"><use href="#vert"/></svg>
<svg class="i c" style="left:1649px;top:436px"><use href="#chev"/></svg>
<div class="a" style="left:1661px;top:432px;width:229px;height:18px;background:#1b1b1b"></div>
<span class="t" style="left:1668px;top:434px">Vert</span>
<div class="g" style="left:1891px;top:432px;width:19px;height:18px;border-radius:0 4px 4px 0"></div>
<svg class="i" style="left:1893px;top:433px;color:#bbb"><path d="M8 2l5 1.500v5c0 3-3 5-5 6-2-1-5-3-5-6v-5z"/></svg>
<!-- vertex groups -->
<svg class="i c" style="left:1636px;top:469px"><use href="#chev"/></svg>
<span class="t" style="left:1651px;top:467px">Vertex Groups</span>
<span class="t d" style="left:1892px;top:465px;font-size:8px;letter-spacing:0">::::</span>
<div class="a" style="left:1643px;top:500px;width:226px;height:18px;background:#4b4b50;border-radius:3px"></div>
<svg class="i" style="left:1646px;top:501px"><use href="#group"/></svg>
<span class="t w" style="left:1668px;top:502px">hidung</span>
<svg class="i" style="left:1852px;top:501px;color:#aaa"><path d="M1 6a4 4 0 0 1 8 0v2"/><rect x="6" y="8" width="8" height="6"/></svg>
<span class="t d" style="left:1649px;top:597px;font-size:7px">▶</span>
<span class="t d" style="left:1760px;top:597px;font-size:8px;letter-spacing:0">::::</span>
<div class="g" style="left:1884px;top:495px;width:18px;height:38px"></div>
<div class="a" style="left:1884px;top:513px;width:18px;height:1px;background:#3a3a3a"></div>
<span class="t m w" style="left:1884px;top:496px;width:18px;font-size:14px">+</span>
<span class="t m w" style="left:1884px;top:516px;width:18px;font-size:14px">−</span>
<div class="g" style="left:1884px;top:542px;width:18px;height:17px;background:#242424"></div>
<svg class="i c" style="left:1888px;top:546px"><use href="#chev"/></svg>
<div class="g" style="left:1884px;top:567px;width:18px;height:38px"></div>
<div class="a" style="left:1884px;top:585px;width:18px;height:1px;background:#3a3a3a"></div>
<svg class="a" style="left:1884px;top:567px;width:18px;height:38px"><path d="M5 12l4-6 4 6zM5 25l4 6 4-6z" fill="#e6e6e6"/></svg>
<!-- shape keys -->
<svg class="i c" style="left:1636px;top:632px"><use href="#chev"/></svg>
<span class="t" style="left:1651px;top:630px">Shape Keys</span>
<span class="t d" style="left:1892px;top:628px;font-size:8px;letter-spacing:0">::::</span>
<svg class="i" style="left:1646px;top:664px"><use href="#sk"/></svg>
<span class="t" style="left:1668px;top:665px">Basis</span>
<svg class="a" style="left:1853px;top:665px;width:14px;height:14px"><rect x="1" y="1" width="11" height="11" rx="1.500" fill="#ddd"/><path d="M3 7l2.500 2.500L10 4" stroke="#222" stroke-width="1.500" fill="none"/></svg>
<div class="a" style="left:1643px;top:683px;width:226px;height:18px;background:#4b4b50;border-radius:3px"></div>
<svg class="i" style="left:1646px;top:684px"><use href="#sk"/></svg>
<span class="t w" style="left:1668px;top:685px">Key 1</span>
<span class="t" style="left:1807px;top:685px">0.000</span>
<svg class="a" style="left:1853px;top:685px;width:14px;height:14px"><rect x="1" y="1" width="11" height="11" rx="1.500" fill="#ddd"/><path d="M3 7l2.500 2.500L10 4" stroke="#222" stroke-width="1.500" fill="none"/></svg>
<span class="t d" style="left:1649px;top:760px;font-size:7px">▶</span>
<span class="t d" style="left:1760px;top:760px;font-size:8px;letter-spacing:0">::::</span>
<div class="g" style="left:1884px;top:658px;width:18px;height:38px"></div>
<div class="a" style="left:1884px;top:677px;width:18px;height:1px;background:#3a3a3a"></div>
<span class="t m w" style="left:1884px;top:659px;width:18px;font-size:14px">+</span>
<span class="t m w" style="left:1884px;top:679px;width:18px;font-size:14px">−</span>
<div class="g" style="left:1884px;top:704px;width:18px;height:18px;background:#242424"></div>
<svg class="i c" style="left:1888px;top:708px"><use href="#chev"/></svg>
<div class="g" style="left:1884px;top:730px;width:18px;height:38px"></div>
<div class="a" style="left:1884px;top:748px;width:18px;height:1px;background:#3a3a3a"></div>
<svg class="a" style="left:1884px;top:730px;width:18px;height:38px"><path d="M5 12l4-6 4 6zM5 25l4 6 4-6z" fill="#e6e6e6"/></svg>
<!-- relative -->
<div class="g" style="left:1638px;top:786px;width:12px;height:12px;background:#4772b3;border-radius:2px"></div>
<svg class="a" style="left:1638px;top:786px;width:12px;height:12px"><path d="M2 6l3 3 5-6" stroke="#fff" stroke-width="1.600" fill="none"/></svg>
<span class="t" style="left:1654px;top:785px">Relative</span>
<div class="g" style="left:1836px;top:783px;width:37px;height:18px"></div>
<svg class="i" style="left:1837px;top:784px;color:#aaa"><path d="M9 2l5 5-3 1-3 3 0 3-6-6 3 0 3-3zM5 11l-4 4"/></svg>
<svg class="i" style="left:1856px;top:784px"><path d="M4 3h6M3 4v7M13 6v5M4 12h8"/><rect x="2" y="2" width="2.500" height="2.500"/><rect x="10" y="1" width="4" height="4" fill="currentColor" stroke="none"/><rect x="2" y="11" width="2.500" height="2.500"/><rect x="12" y="11" width="2.500" height="2.500"/></svg>
<div class="g" style="left:1884px;top:783px;width:18px;height:18px"></div>
<svg class="i" style="left:1885px;top:784px"><path d="M4 4l8 8M12 4l-8 8"/></svg>
<span class="t r" style="left:1630px;top:810px;width:100px">Value</span>
<div class="g" style="left:1741px;top:808px;width:141px;height:18px"></div>
<span class="t m" style="left:1741px;top:810px;width:141px">0.000</span>
<span class="a" style="left:1891px;top:815px;width:4px;height:4px;border-radius:50%;background:#ddd"></span>
<span class="t r" style="left:1630px;top:835px;width:100px">Range Min</span>
<div class="g" style="left:1741px;top:833px;width:141px;height:38px"></div>
<div class="a" style="left:1741px;top:852px;width:141px;height:1px;background:#3a3a3a"></div>
<span class="t m" style="left:1741px;top:835px;width:141px">0.000</span>
<span class="a" style="left:1891px;top:840px;width:4px;height:4px;border-radius:50%;background:#ddd"></span>
<span class="t r" style="left:1630px;top:855px;width:100px">Max</span>
<span class="t m" style="left:1741px;top:854px;width:141px">1.000</span>
<span class="a" style="left:1891px;top:860px;width:4px;height:4px;border-radius:50%;background:#ddd"></span>
<span class="t r" style="left:1630px;top:879px;width:100px">Vertex Group</span>
<div class="g" style="left:1741px;top:877px;width:141px;height:18px;background:#1c1c1c"></div>
<svg class="i" style="left:1744px;top:878px"><use href="#group"/></svg>
<span class="t r" style="left:1630px;top:903px;width:100px">Relative To</span>
<div class="g" style="left:1741px;top:901px;width:141px;height:18px;background:#1c1c1c"></div>
<svg class="i" style="left:1744px;top:902px"><use href="#sk"/></svg>
<span class="t" style="left:1766px;top:903px">Basis</span>
<svg class="i c" style="left:1636px;top:938px;transform:rotate(-90deg)"><use href="#chev"/></svg>
<span class="t" style="left:1651px;top:936px">UV Maps</span>
<span class="t d" style="left:1892px;top:934px;font-size:8px;letter-spacing:0">::::</span>
<svg class="i c" style="left:1636px;top:965px;transform:rotate(-90deg)"><use href="#chev"/></svg>
<span class="t" style="left:1651px;top:963px">Vertex Colors</span>
<span class="t d" style="left:1892px;top:961px;font-size:8px;letter-spacing:0">::::</span>

<!-- timeline -->
<div class="a" style="left:0;top:927px;width:1590px;height:24px;background:#303030;border-radius:0 5px 0 0"></div>
<div class="a" style="left:0;top:951px;width:1590px;height:32px;background:#1f1f1f"></div>
<div class="a" style="left:8px;top:972px;width:1574px;height:10px;background:#565656;border-radius:5px"></div>
<div class="a" style="left:9px;top:974px;width:6px;height:6px;background:#333;border-radius:50%"></div>
<div class="a" style="left:1576px;top:974px;width:5px;height:6px;background:#333;border-radius:50%"></div>
<div class="b" style="left:8px;top:930px;width:32px;height:18px"></div>
<svg class="i" style="left:11px;top:931px"><circle cx="8" cy="8" r="6.500" fill="currentColor" stroke="none"/><path d="M8 2L4.500 8 8 14z" fill="#333" stroke="none"/></svg>
<svg class="i c" style="left:28px;top:935px"><use href="#chev"/></svg>
<div class="b" style="left:46px;top:930px;width:126px;height:18px"></div>
<span class="t" style="left:52px;top:932px">Playback</span>
<svg class="i c" style="left:102px;top:935px"><use href="#chev"/></svg>
<span class="t" style="left:121px;top:932px">Keying</span>
<svg class="i c" style="left:161px;top:935px"><use href="#chev"/></svg>
<span class="t" style="left:182px;top:932px">View</span>
<span class="t" style="left:222px;top:932px">Marker</span>
<div class="g" style="left:703px;top:929px;width:19px;height:19px"></div>
<span class="a" style="left:708px;top:934px;width:9px;height:9px;border-radius:50%;background:#eee"></span>
<div class="a" style="left:722px;top:929px;width:20px;height:19px;background:#383838;border-radius:0 4px 4px 0"></div>
<div class="g" style="left:747px;top:929px;width:120px;height:19px"></div>
<svg class="a" style="left:747px;top:929px;width:120px;height:19px"><path d="M20 0v19M40 0v19M60 0v19M80 0v19M100 0v19" stroke="#444"/><path fill="#eee" d="M5 4h2v11H5zM7.500 9.500l5.500-5v10zM22 9.500l3-3v6zM25 9.500l4-4.500 4 4.500-4 4.500zM33 9.500l4-3.500v7zM56 3.500v12l-9-6zM65 3.500v12l9-6zM83 6v7l4-3.500zM87 9.500l4-4.500 4 4.500-4 4.500zM95 6v7l3-3.500zM108 4.500l5.500 5-5.500 5zM114 4h2v11h-2z"/></svg>
<div class="g" style="left:1313px;top:929px;width:73px;height:19px"></div>
<span class="t m" style="left:1313px;top:932px;width:73px">1</span>
<div class="g" style="left:1393px;top:929px;width:191px;height:19px"></div>
<svg class="i" style="left:1395px;top:930px"><circle cx="8" cy="9" r="5.500"/><path d="M8 6v3l2 2M6 1.500h4"/></svg>
<div class="a" style="left:1412px;top:929px;width:1px;height:19px;background:#3a3a3a"></div>
<div class="a" style="left:1500px;top:929px;width:1px;height:19px;background:#3a3a3a"></div>
<span class="t" style="left:1427px;top:932px">Start</span>
<span class="t r" style="left:1470px;top:932px;width:20px">1</span>
<span class="t" style="left:1516px;top:932px">End</span>
<span class="t" style="left:1550px;top:932px">250</span>
<div class="g" style="left:47px;top:954px;width:23px;height:17px;background:#4772b3"></div>
<span class="t m w" style="left:47px;top:956px;width:23px">1</span>
<span class="n" style="left:91px">10</span><span class="n" style="left:150px">20</span><span class="n" style="left:209px">30</span><span class="n" style="left:268px">40</span><span class="n" style="left:327px">50</span><span class="n" style="left:386px">60</span><span class="n" style="left:445px">70</span><span class="n" style="left:504px">80</span><span class="n" style="left:563px">90</span><span class="n" style="left:623px">100</span><span class="n" style="left:681px">110</span><span class="n" style="left:741px">120</span><span class="n" style="left:800px">130</span><span class="n" style="left:860px">140</span><span class="n" style="left:918px">150</span><span class="n" style="left:978px">160</span><span class="n" style="left:1037px">170</span><span class="n" style="left:1096px">180</span><span class="n" style="left:1155px">190</span><span class="n" style="left:1214px">200</span><span class="n" style="left:1273px">210</span><span class="n" style="left:1332px">220</span><span class="n" style="left:1392px">230</span><span class="n" style="left:1451px">240</span><span class="n" style="left:1510px">250</span>
<span class="t d" style="left:1584px;top:964px;font-size:15px">‹</span>
<span class="t d" style="left:0;top:964px;font-size:15px">›</span>

<!-- status -->
<div class="a" style="left:0;top:983px;width:1917px;height:22px;background:#1d1d1d"></div>
<svg class="i" style="left:8px;top:985px;color:#aaa"><use href="#mouse"/></svg>
<span class="t d" style="left:33px;top:986px">Set 3D Cursor</span>
<svg class="i" style="left:110px;top:985px;color:#aaa"><use href="#mousel"/></svg>
<span class="t d" style="left:137px;top:986px">Box Select</span>
<svg class="i" style="left:219px;top:985px;color:#aaa"><use href="#mouse"/></svg>
<span class="t d" style="left:244px;top:986px">Rotate View</span>
<svg class="i" style="left:431px;top:985px;color:#aaa"><use href="#mousel"/></svg>
<span class="t d" style="left:455px;top:986px">Select</span>
<svg class="i" style="left:496px;top:985px;color:#aaa"><use href="#mousel"/></svg>
<span class="t d" style="left:521px;top:986px">Move</span>
<span class="t d" style="left:1884px;top:986px">3.0.0</span>
</body></html>
